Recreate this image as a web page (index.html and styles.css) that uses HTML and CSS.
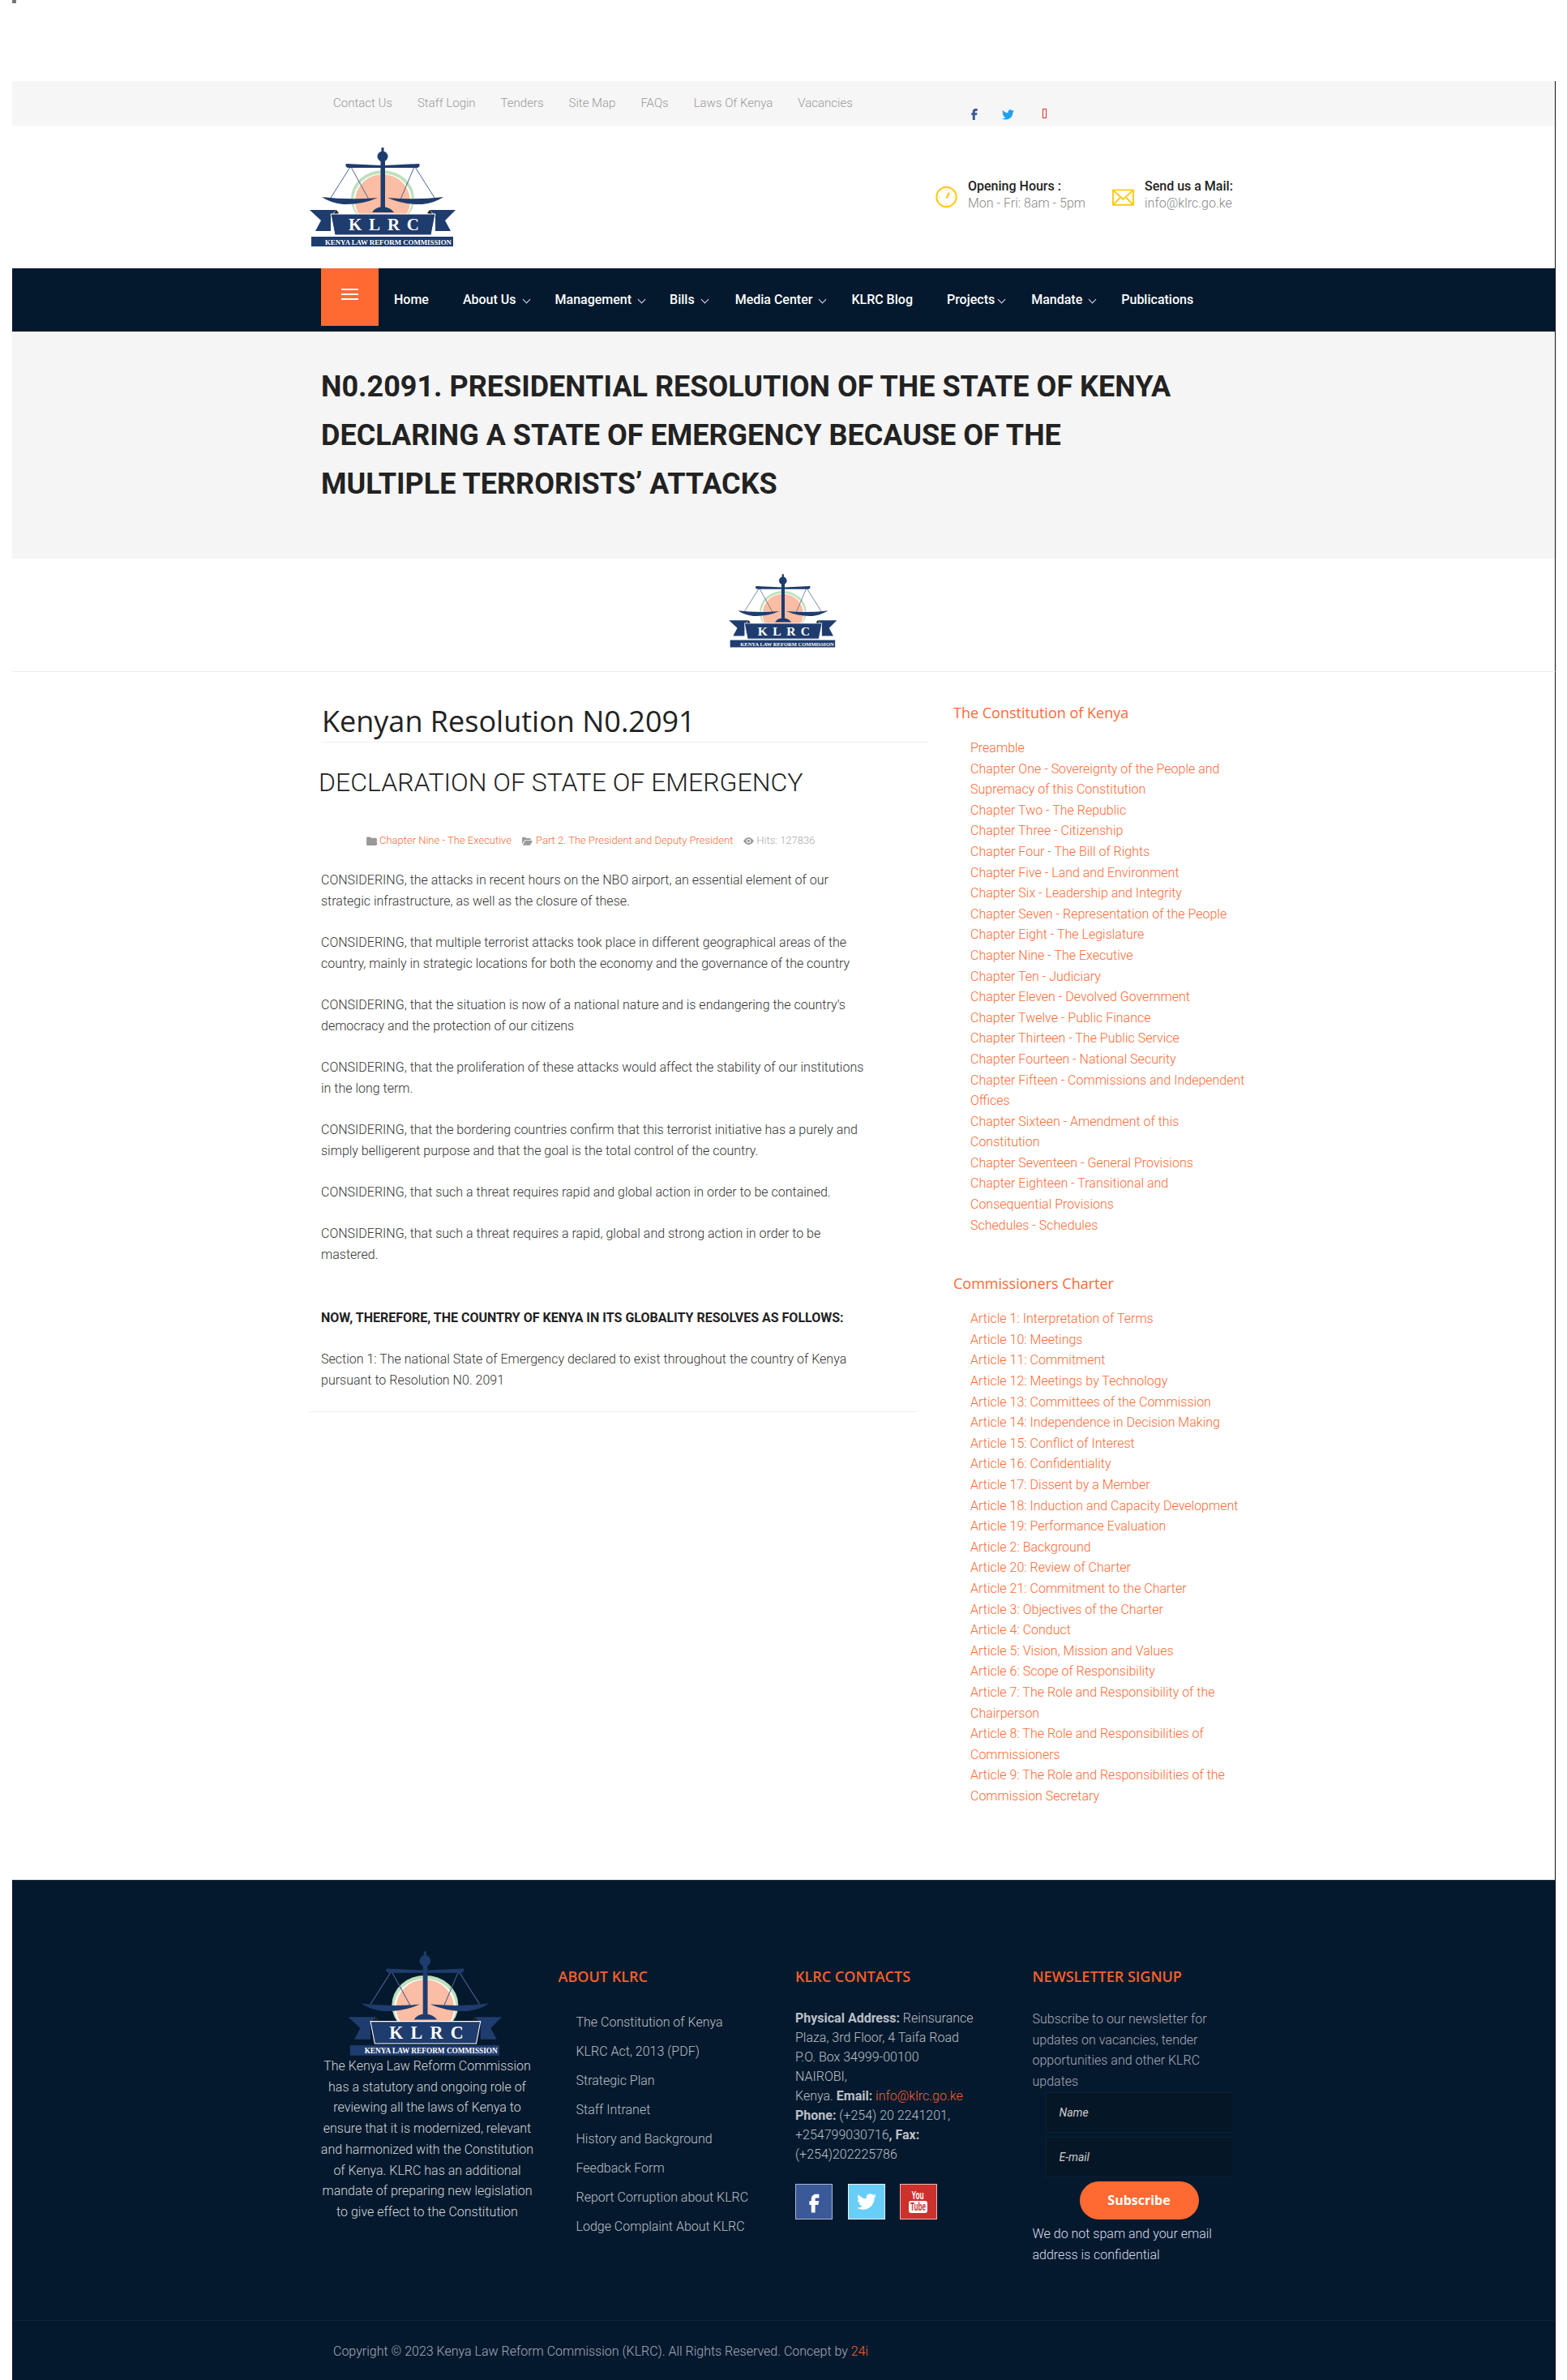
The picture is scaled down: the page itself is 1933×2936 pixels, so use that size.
FILE: index.html
```html
<!DOCTYPE html>
<html lang="en">
<head>
  <meta charset="UTF-8">
  <meta name="viewport" content="width=device-width, initial-scale=1.0">
  <title>Kenyan Resolution N0.2091</title>
  <link rel="stylesheet" href="styles.css">
</head>
<body>
  <svg class="defs" width="0" height="0">
    <symbol id="klrc-logo" viewBox="0 0 200 135">
      <ellipse cx="97" cy="70" rx="39" ry="35" fill="#bfe0bd"/>
      <ellipse cx="97" cy="72" rx="36" ry="33" fill="#fff"/>
      <ellipse cx="97" cy="73" rx="34" ry="33" fill="#fbbda3"/>
      <path d="M57 31 33 69M58 31 80 71M137 31 161 69M136 31 119 71" stroke="#4a6390" stroke-width="1" fill="none"/>
      <path d="M52 27 95 29V32L54 32Q50 30 52 27ZM142 27 100 29V32L140 32Q144 30 142 27Z" fill="#1f3c6e"/>
      <circle cx="97" cy="18" r="6.5" fill="#1f3c6e"/>
      <rect x="95.5" y="7" width="3" height="8" fill="#1f3c6e"/>
      <rect x="94.5" y="20" width="5.5" height="62" fill="#1f3c6e"/>
      <path d="M84 87Q87 81 97 80 107 81 111 87Z" fill="#1f3c6e"/>
      <path d="M22 68Q55 72 91 69 70 78 48 77 32 75 22 68ZM172 68Q139 72 103 69 124 78 146 77 162 75 172 68Z" fill="#1f3c6e"/>
      <path d="M7 84H40L33 91V110H14L21 97ZM187 84H155L162 91V110H181L174 97Z" fill="#1f3c6e"/>
      <path d="M34 92 40 84 43 88ZM161 92 155 84 152 88Z" fill="#222"/>
      <path d="M33 89H162L157 115H38Z" fill="#1f3c6e" stroke="#fff" stroke-width="1"/>
      <rect x="9" y="117" width="175" height="12" fill="#1f3c6e"/>
    </symbol>
  </svg>

  <div class="page">
    <div class="stray-mark"></div>

    <div class="topbar">
      <ul class="toplinks">
        <li>Contact Us</li>
        <li>Staff Login</li>
        <li>Tenders</li>
        <li>Site Map</li>
        <li>FAQs</li>
        <li>Laws Of Kenya</li>
        <li>Vacancies</li>
      </ul>
      <div class="topsocial">
        <svg class="icon-fb" viewBox="7 4 10 19"><path d="M14 8h3V4h-3c-3 0-5 2-5 5v2H7v4h2v8h4v-8h3l1-4h-4V9c0-.6.4-1 1-1z"/></svg>
        <svg class="icon-tw" viewBox="0 0 24 24"><path d="M23.953 4.57a10 10 0 01-2.825.775 4.958 4.958 0 002.163-2.723c-.951.555-2.005.959-3.127 1.184a4.92 4.92 0 00-8.384 4.482C7.69 8.095 4.067 6.13 1.64 3.162a4.822 4.822 0 00-.666 2.475c0 1.71.87 3.213 2.188 4.096a4.904 4.904 0 01-2.228-.616v.06a4.923 4.923 0 003.946 4.827 4.996 4.996 0 01-2.212.085 4.936 4.936 0 004.604 3.417 9.867 9.867 0 01-6.102 2.105c-.39 0-.779-.023-1.17-.067a13.995 13.995 0 007.557 2.209c9.053 0 13.998-7.496 13.998-13.985 0-.21 0-.42-.015-.63A9.935 9.935 0 0024 4.59z"/></svg>
        <span class="icon-missing"></span>
      </div>
    </div>

    <div class="brand">
      <svg class="logo-main" viewBox="0 0 200 135">
        <use href="#klrc-logo" width="200" height="135"/>
        <text x="55" y="109" class="logo-big" textLength="87">KLRC</text>
        <text x="26" y="126.5" class="logo-small" textLength="156" lengthAdjust="spacingAndGlyphs">KENYA LAW REFORM COMMISSION</text>
      </svg>
      <div class="brand-info">
        <div class="info-item">
          <svg class="info-icon" viewBox="0 0 28 28"><circle cx="14" cy="14" r="12.6" fill="none" stroke="#ffc916" stroke-width="2.2"/><path d="M14 15.5 17.5 8.5" stroke="#ffc916" stroke-width="2.4"/><path d="M14 4v2M24 14h-2M6 14H4M14 24v-2M7 7l1 1M21 7l-1 1M7 21l1-1M21 21l-1-1" stroke="#ffc916" stroke-width=".8"/></svg>
          <div><b>Opening Hours :</b><span>Mon - Fri: 8am - 5pm</span></div>
        </div>
        <div class="info-item info-mail">
          <svg class="info-icon" viewBox="0 0 28 21"><path d="M1 1H27V20H1ZM1 1 14 13 27 1M1 20 11 10M27 20 17 10" fill="none" stroke="#ffc916" stroke-width="2"/></svg>
          <div><b>Send us a Mail:</b><span>info@klrc.go.ke</span></div>
        </div>
      </div>
    </div>

    <nav class="mainnav">
      <div class="menu-btn"><i></i><i></i><i></i></div>
      <ul class="navlist">
        <li class="n-home">Home</li>
        <li class="n-about has-sub">About Us</li>
        <li class="n-man has-sub">Management</li>
        <li class="n-bills has-sub">Bills</li>
        <li class="n-media has-sub">Media Center</li>
        <li class="n-blog">KLRC Blog</li>
        <li class="n-proj has-sub">Projects</li>
        <li class="n-mand has-sub">Mandate</li>
        <li>Publications</li>
      </ul>
    </nav>

    <header class="hero">
      <h1>N0.2091. PRESIDENTIAL RESOLUTION OF THE STATE OF KENYA DECLARING A STATE OF EMERGENCY BECAUSE OF THE MULTIPLE TERRORISTS’ ATTACKS</h1>
    </header>

    <div class="logo-strip">
      <svg class="logo-mid" viewBox="0 0 200 135">
        <use href="#klrc-logo" width="200" height="135"/>
        <text x="55" y="109" class="logo-big" textLength="87">KLRC</text>
        <text x="26" y="126.5" class="logo-small" textLength="156" lengthAdjust="spacingAndGlyphs">KENYA LAW REFORM COMMISSION</text>
      </svg>
    </div>

    <div class="content">
      <main class="article">
        <h2 class="article-title">Kenyan Resolution N0.2091</h2>
        <h3 class="article-sub">DECLARATION OF STATE OF EMERGENCY</h3>
        <div class="meta">
          <svg class="meta-icon" viewBox="0 0 14 12"><path d="M0 2Q0 .5 1.5 .5H5L6.5 2H12.5Q14 2 14 3.5V10.500Q14 12 12.500 12H1.500Q0 12 0 10.500Z"/></svg>
          <a>Chapter Nine - The Executive</a>
          <svg class="meta-icon m2" viewBox="0 0 15 12"><path d="M0 2Q0 .5 1.500 .5H4.500L6 2H11Q12.500 2 12.500 3.500V4.500H4L0 10ZM4.500 5.500H15L11.500 12H0.800Z"/></svg>
          <a>Part 2. The President and Deputy President</a>
          <svg class="meta-icon m3" viewBox="0 0 14 12"><path fill-rule="evenodd" d="M7 1C11 1 14 6 14 6S11 11 7 11 0 6 0 6 3 1 7 1ZM7 3A3 3 0 1 0 7 9 3 3 0 0 0 7 3Z"/><circle cx="7" cy="6" r="1.800"/></svg>
          <span>Hits: 127836</span>
        </div>
        <div class="article-body">
          <p>CONSIDERING, the attacks in recent hours on the NBO airport, an essential element of our strategic infrastructure, as well as the closure of these.</p>
          <p>CONSIDERING, that multiple terrorist attacks took place in different geographical areas of the country, mainly in strategic locations for both the economy and the governance of the country</p>
          <p>CONSIDERING, that the situation is now of a national nature and is endangering the country's democracy and the protection of our citizens</p>
          <p>CONSIDERING, that the proliferation of these attacks would affect the stability of our institutions in the long term.</p>
          <p>CONSIDERING, that the bordering countries confirm that this terrorist initiative has a purely and simply belligerent purpose and that the goal is the total control of the country.</p>
          <p>CONSIDERING, that such a threat requires rapid and global action in order to be contained.</p>
          <p>CONSIDERING, that such a threat requires a rapid, global and strong action in order to be mastered.</p>
          <p class="resolves"><strong>NOW, THEREFORE, THE COUNTRY OF KENYA IN ITS GLOBALITY RESOLVES AS FOLLOWS:</strong></p>
          <p>Section 1: The national State of Emergency declared to exist throughout the country of Kenya pursuant to Resolution N0. 2091</p>
        </div>
        <hr class="article-end">
      </main>

      <aside class="sidebar">
        <h4>The Constitution of Kenya</h4>
        <ul>
          <li>Preamble</li>
          <li>Chapter One - Sovereignty of the People and Supremacy of this Constitution</li>
          <li>Chapter Two - The Republic</li>
          <li>Chapter Three - Citizenship</li>
          <li>Chapter Four - The Bill of Rights</li>
          <li>Chapter Five - Land and Environment</li>
          <li>Chapter Six - Leadership and Integrity</li>
          <li>Chapter Seven - Representation of the People</li>
          <li>Chapter Eight - The Legislature</li>
          <li>Chapter Nine - The Executive</li>
          <li>Chapter Ten - Judiciary</li>
          <li>Chapter Eleven - Devolved Government</li>
          <li>Chapter Twelve - Public Finance</li>
          <li>Chapter Thirteen - The Public Service</li>
          <li>Chapter Fourteen - National Security</li>
          <li>Chapter Fifteen - Commissions and Independent Offices</li>
          <li>Chapter Sixteen - Amendment of this Constitution</li>
          <li>Chapter Seventeen - General Provisions</li>
          <li>Chapter Eighteen - Transitional and Consequential Provisions</li>
          <li>Schedules - Schedules</li>
        </ul>
        <h4 class="second">Commissioners Charter</h4>
        <ul>
          <li>Article 1: Interpretation of Terms</li>
          <li>Article 10: Meetings</li>
          <li>Article 11: Commitment</li>
          <li>Article 12: Meetings by Technology</li>
          <li>Article 13: Committees of the Commission</li>
          <li>Article 14: Independence in Decision Making</li>
          <li>Article 15: Conflict of Interest</li>
          <li>Article 16: Confidentiality</li>
          <li>Article 17: Dissent by a Member</li>
          <li>Article 18: Induction and Capacity Development</li>
          <li>Article 19: Performance Evaluation</li>
          <li>Article 2: Background</li>
          <li>Article 20: Review of Charter</li>
          <li>Article 21: Commitment to the Charter</li>
          <li>Article 3: Objectives of the Charter</li>
          <li>Article 4: Conduct</li>
          <li>Article 5: Vision, Mission and Values</li>
          <li>Article 6: Scope of Responsibility</li>
          <li>Article 7: The Role and Responsibility of the Chairperson</li>
          <li>Article 8: The Role and Responsibilities of Commissioners</li>
          <li>Article 9: The Role and Responsibilities of the Commission Secretary</li>
        </ul>
      </aside>
    </div>

    <footer class="footer">
      <div class="footer-cols">
        <div class="footer-about">
          <svg class="logo-foot" viewBox="0 0 200 135">
            <use href="#klrc-logo" width="200" height="135"/>
            <text x="55" y="109" class="logo-big" textLength="87">KLRC</text>
            <text x="26" y="126.5" class="logo-small" textLength="156" lengthAdjust="spacingAndGlyphs">KENYA LAW REFORM COMMISSION</text>
          </svg>
          <p>The Kenya Law Reform Commission has a statutory and ongoing role of reviewing all the laws of Kenya to ensure that it is modernized, relevant and harmonized with the Constitution of Kenya. KLRC has an additional mandate of preparing new legislation to give effect to the Constitution</p>
        </div>
        <div>
          <h5>ABOUT KLRC</h5>
          <ul class="footer-links">
            <li>The Constitution of Kenya</li>
            <li>KLRC Act, 2013 (PDF)</li>
            <li>Strategic Plan</li>
            <li>Staff Intranet</li>
            <li>History and Background</li>
            <li>Feedback Form</li>
            <li>Report Corruption about KLRC</li>
            <li>Lodge Complaint About KLRC</li>
          </ul>
        </div>
        <div>
          <h5>KLRC CONTACTS</h5>
          <p class="contact-text"><b>Physical Address:</b> Reinsurance Plaza, 3rd Floor, 4 Taifa Road<br>P.O. Box 34999-00100<br>NAIROBI,<br>Kenya. <b>Email:</b> <a>info@klrc.go.ke</a><br><b>Phone:</b> (+254) 20 2241201, +254799030716<b>, Fax:</b> (+254)202225786</p>
          <div class="tiles">
            <svg class="tile" viewBox="0 0 46 44"><rect x=".5" y=".5" width="45" height="43" fill="#3b5998" stroke="#a9b6cf"/><path transform="translate(9 8) scale(1.200)" fill="#fff" d="M14 8h3V4h-3c-3 0-5 2-5 5v2H7v4h2v8h4v-8h3l1-4h-4V9c0-.6.4-1 1-1z"/></svg>
            <svg class="tile" viewBox="0 0 46 44"><rect x=".5" y=".5" width="45" height="43" fill="#68cef8" stroke="#e3f5fd"/><path transform="translate(11 10)" fill="#fff" d="M23.953 4.57a10 10 0 01-2.825.775 4.958 4.958 0 002.163-2.723c-.951.555-2.005.959-3.127 1.184a4.92 4.92 0 00-8.384 4.482C7.69 8.095 4.067 6.13 1.64 3.162a4.822 4.822 0 00-.666 2.475c0 1.71.87 3.213 2.188 4.096a4.904 4.904 0 01-2.228-.616v.06a4.923 4.923 0 003.946 4.827 4.996 4.996 0 01-2.212.085 4.936 4.936 0 004.604 3.417 9.867 9.867 0 01-6.102 2.105c-.39 0-.779-.023-1.17-.067a13.995 13.995 0 007.557 2.209c9.053 0 13.998-7.496 13.998-13.985 0-.21 0-.42-.015-.63A9.935 9.935 0 0024 4.59z"/></svg>
            <svg class="tile" viewBox="0 0 46 44"><rect x=".5" y=".5" width="45" height="43" fill="#cc312d" stroke="#e5b7b5"/><text x="22" y="19" class="yt-you" text-anchor="middle" textLength="15" lengthAdjust="spacingAndGlyphs">You</text><rect x="11" y="21" width="23" height="15" rx="3" fill="#fff"/><text x="22.500" y="33" class="yt-tube" text-anchor="middle" textLength="19" lengthAdjust="spacingAndGlyphs">Tube</text></svg>
          </div>
        </div>
        <div>
          <h5>NEWSLETTER SIGNUP</h5>
          <p class="news-text">Subscribe to our newsletter for updates on vacancies, tender opportunities and other KLRC updates</p>
          <form class="news-form">
            <input type="text" placeholder="Name">
            <input type="text" placeholder="E-mail">
            <button type="button">Subscribe</button>
          </form>
          <p class="news-note">We do not spam and your email address is confidential</p>
        </div>
      </div>
      <div class="copyright">
        Copyright © 2023 Kenya Law Reform Commission (KLRC). All Rights Reserved. Concept by <a>24i</a>
      </div>
    </footer>
  </div>
</body>
</html>
```

FILE: styles.css
```css
* {
  box-sizing: border-box;
}

body {
  margin: 0;
  font-family: 'Roboto', sans-serif;
  font-weight: 300;
  color: #333;
  background: #fff;
}

ul {
  list-style: none;
  margin: 0;
  padding: 0;
}

.defs {
  position: absolute;
}

.logo-big {
  font-family: 'Liberation Serif', serif;
  font-weight: 700;
  font-size: 21px;
  fill: #fff;
}

.logo-small {
  font-family: 'Liberation Serif', serif;
  font-weight: 700;
  font-size: 9px;
  fill: #fff;
}

.page {
  margin-left: 15px;
  width: 1904px;
  height: 2936px;
  overflow: hidden;
}

.stray-mark {
  width: 5px;
  height: 4px;
  margin-bottom: 96px;
  background: #777;
}

/* top bar */
.topbar {
  height: 55px;
  background: #f6f6f6;
  border-right: 1px solid #111;
  padding-left: 396px;
  display: flex;
}

.toplinks {
  display: flex;
  gap: 31px;
  font-size: 15px;
  color: #999;
  line-height: 54px;
}

.topsocial {
  display: flex;
  align-items: center;
  margin: 34px 0 0 146px;
  height: 14px;
}

.icon-fb {
  width: 8px;
  height: 14px;
  fill: #3b5998;
}

.icon-tw {
  width: 15px;
  height: 15px;
  margin-left: 30px;
  fill: #1da1f2;
}

.icon-missing {
  width: 5px;
  height: 12px;
  margin: -2px 0 0 35px;
  border: 1px solid #e03030;
}

/* logo row */
.brand {
  height: 176px;
  border-right: 1px solid #111;
  padding: 20px 0 0 360px;
  display: flex;
}

.logo-main {
  width: 200px;
  height: 135px;
}

.brand-info {
  display: flex;
  margin: 32px 0 0 579px;
}

.info-item {
  display: flex;
  align-items: center;
  gap: 13px;
  height: 66px;
  line-height: 21px;
  font-size: 16px;
}

.info-item b {
  display: block;
  font-weight: 500;
  color: #222;
}

.info-item span {
  display: block;
  font-weight: 300;
  color: #888;
  font-size: 16px;
}

.info-icon {
  width: 27px;
  height: 28px;
  margin-top: 6px;
}

.info-mail {
  margin-left: 33px;
}

.info-mail .info-icon {
  height: 21px;
}

/* main menu */
.mainnav {
  height: 78px;
  background: #04192d;
  border-right: 1px solid #111;
  padding-left: 381px;
  display: flex;
}

.menu-btn {
  width: 71px;
  height: 71px;
  background: #ff6a33;
  padding: 25px 25px 0;
  margin-right: 19px;
}

.menu-btn i {
  display: block;
  height: 2px;
  background: #fff;
  margin-bottom: 4px;
}

.navlist {
  display: flex;
  font-size: 16px;
  font-weight: 500;
  color: #fff;
  line-height: 77px;
}

.navlist li {
  position: relative;
}

.has-sub::after {
  content: "";
  position: absolute;
  top: 35px;
  right: -16px;
  width: 6px;
  height: 6px;
  border-right: 1px solid #dde;
  border-bottom: 1px solid #dde;
  transform: rotate(45deg);
}

.n-home { margin-right: 42px; }
.n-about { margin-right: 48px; }
.n-man { margin-right: 47px; }
.n-bills { margin-right: 50px; }
.n-media { margin-right: 48px; }
.n-blog { margin-right: 42px; }
.n-proj { margin-right: 45px; }
.n-mand { margin-right: 48px; }

.n-proj.has-sub::after {
  right: -12px;
}

/* page title */
.hero {
  height: 280px;
  background: #f5f5f5;
  border-right: 1px solid #111;
  padding: 38px 0 0 381px;
}

.hero h1 {
  margin: 0;
  width: 1060px;
  font-size: 36px;
  font-weight: 700;
  line-height: 60px;
  color: #222;
}

.logo-strip {
  height: 140px;
  border-right: 1px solid #111;
  border-bottom: 1px solid #eee;
  padding: 14px 0 0 879px;
}

.logo-mid {
  width: 148px;
  height: 100px;
  display: block;
}

/* article + sidebar */
.content {
  height: 1490px;
  border-right: 1px solid #111;
  display: flex;
  padding: 37px 0 0 366px;
}

.article {
  width: 780px;
}

.article-title {
  margin: 0 15px 0 16px;
  font-family: 'Open Sans', sans-serif;
  font-weight: 400;
  font-size: 36px;
  line-height: 47px;
  padding-bottom: 2px;
  border-bottom: 1px solid #eee;
  color: #222;
}

.article-sub {
  margin: 20px 0 0 12px;
  font-size: 32px;
  font-weight: 300;
  line-height: 58px;
  color: #222;
}

.meta {
  display: flex;
  align-items: center;
  margin: 34px 0 0 71px;
  font-size: 13px;
  line-height: 18px;
  color: #aaa;
}

.meta a {
  color: #ff6a33;
}

.meta-icon {
  width: 13px;
  height: 11px;
  margin-right: 3px;
  fill: #999;
}

.m2 {
  margin-left: 13px;
  margin-right: 4px;
}

.m3 {
  margin-left: 13px;
}

.article-body {
  margin: 27px 0 0 15px;
  width: 680px;
  font-size: 16px;
  line-height: 26px;
}

.article-body p {
  margin: 0 0 25px;
}

.article-body .resolves {
  margin: 52px 0 25px;
  color: #222;
}

.resolves strong {
  font-weight: 700;
}

.article-end {
  margin: 1px 0 0;
  width: 750px;
  border: 0;
  border-top: 1px solid #eee;
}

.sidebar {
  margin-left: 15px;
  width: 363px;
  font-size: 16px;
  color: #ff6a33;
}

.sidebar h4 {
  margin: 0 0 18px;
  font-family: 'Open Sans', sans-serif;
  font-weight: 400;
  font-size: 18px;
  line-height: 26px;
}

.sidebar h4.second {
  margin-top: 46px;
}

.sidebar ul {
  padding-left: 21px;
  line-height: 25.600px;
}

/* footer */
.footer {
  height: 617px;
  background: #04192d;
  border-top: 1px solid #1e3348;
  border-right: 1px solid #111;
  color: #bcc0c8;
}

.footer-cols {
  height: 543px;
  padding: 88px 0 0 381px;
  display: grid;
  grid-template-columns: repeat(4, 262px);
  column-gap: 30.500px;
  border-bottom: 1px solid #0c2437;
}

.footer p {
  margin: 0;
}

.footer-about {
  margin: 0 -5px;
  text-align: center;
  font-size: 16px;
  line-height: 25.700px;
  color: #d5d8dc;
}

.logo-foot {
  display: block;
  width: 211px;
  height: 142px;
  margin: -8px auto -6px;
}

.footer h5 {
  margin: 18px 0 0;
  font-family: 'Open Sans', sans-serif;
  font-weight: 600;
  font-size: 18px;
  line-height: 24px;
  color: #f5602b;
}

.footer-links {
  margin: 27px 0 0 22px;
  font-size: 16px;
  line-height: 36px;
}

.footer .contact-text {
  margin-top: 28px;
  font-size: 16px;
  line-height: 24px;
}

.contact-text b {
  font-weight: 700;
}

.contact-text a {
  color: #f5602b;
}

.tiles {
  display: flex;
  gap: 18.500px;
  margin-top: 24px;
}

.tile {
  width: 46px;
  height: 44px;
}

.yt-you {
  font-family: 'Liberation Sans', sans-serif;
  font-weight: 700;
  font-size: 15px;
  fill: #fff;
}

.yt-tube {
  font-family: 'Liberation Sans', sans-serif;
  font-weight: 700;
  font-size: 14px;
  fill: #cc312d;
}

.footer .news-text {
  margin-top: 28px;
  font-size: 16px;
  line-height: 25.700px;
  color: #aab;
}

.news-form {
  margin-left: 16px;
  width: 230px;
  display: flex;
  flex-direction: column;
}

.news-form input {
  height: 50px;
  margin-bottom: 5px;
  padding: 0 16px;
  background: #051627;
  border: 1px solid #0a2236;
  border-width: 1px 0 1px 1px;
  font-family: 'Roboto', sans-serif;
  font-style: italic;
  font-size: 14px;
  color: #ccc;
}

.news-form input::placeholder {
  color: #ccc;
  opacity: 1;
}

.news-form button {
  width: 147px;
  height: 47px;
  margin-left: 42px;
  border: 0;
  border-radius: 24px;
  background: #ff6a33;
  color: #fff;
  font-family: 'Open Sans', sans-serif;
  font-weight: 700;
  font-size: 16px;
}

.footer .news-note {
  margin-top: 5px;
  font-size: 16px;
  line-height: 25.700px;
  color: #dde;
}

.copyright {
  padding: 28px 0 0 396px;
  font-size: 16px;
  color: #aab;
}

.copyright a {
  color: #f5602b;
}
```
